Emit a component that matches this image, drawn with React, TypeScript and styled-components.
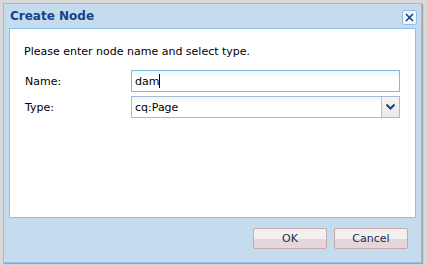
import styled, { createGlobalStyle } from "styled-components";

const Global = createGlobalStyle`
  html, body {
    margin: 0;
    padding: 0;
    background: #d9d9d9;
  }
  body {
    width: 427px;
    height: 266px;
    overflow: hidden;
    font-family: Tahoma, "DejaVu Sans", sans-serif;
  }
`;

const Page = styled.div`
  padding: 3px 5px 3px 3px;
  box-sizing: border-box;
  width: 427px;
  height: 266px;
`;

const Window = styled.div`
  height: 100%;
  box-sizing: border-box;
  background: #c5dcee;
  border: 1px solid #99bbe8;
  box-shadow: 1px 1px 1px rgba(0, 0, 0, 0.25);
  padding: 0 5px 0 5px;
  display: flex;
  flex-direction: column;
`;

const Header = styled.div`
  height: 24px;
  display: flex;
  align-items: center;
  justify-content: space-between;
  padding: 0 0 0 1px;
`;

const Title = styled.span`
  font-family: Tahoma, "DejaVu Sans", sans-serif;
  font-size: 12px;
  font-weight: bold;
  color: #15428b;
`;

const CloseButton = styled.div`
  width: 13px;
  height: 13px;
  margin-right: -1px;
  margin-top: 3px;
  border: 1px solid #99bbe8;
  border-radius: 2px;
  background: #f2f7fc;
  display: flex;
  align-items: center;
  justify-content: center;
`;

const Body = styled.div`
  flex: 1;
  background: #fff;
  border: 1px solid #8cc0ee;
  padding: 15px 15px 0 14px;
`;

const Intro = styled.div`
  font-size: 11px;
  color: #000;
  margin-bottom: 11px;
  line-height: 15px;
`;

const Row = styled.div`
  display: flex;
  align-items: center;
  margin-bottom: 4px;
`;

const Label = styled.label`
  width: 106px;
  font-size: 11px;
  color: #000;
  padding-left: 1px;
`;

const Field = styled.div<{ $focus?: boolean }>`
  flex: 1;
  height: 20px;
  box-sizing: content-box;
  border: 1px solid ${(p) => (p.$focus ? "#7eb9e2" : "#a9b7d8")};
  background: linear-gradient(#eef6f8, #fff 7px);
  display: flex;
  align-items: center;
  font-size: 11px;
  color: #000;
`;

const Value = styled.span`
  flex: 1;
  padding-left: 3px;
  display: flex;
  align-items: center;
`;

const Caret = styled.span`
  display: inline-block;
  width: 1px;
  height: 14px;
  background: #000;
`;

const Trigger = styled.div`
  width: 17px;
  height: 20px;
  border-left: 1px solid #b8c0d8;
  background: linear-gradient(#f7f3f3, #ece8e8);
  display: flex;
  align-items: center;
  justify-content: center;
`;

const Footer = styled.div`
  height: 44px;
  display: flex;
  justify-content: flex-end;
  align-items: flex-start;
  gap: 7px;
  padding: 10px 8px 0 0;
  box-sizing: border-box;
`;

const Button = styled.div`
  width: 72px;
  height: 19px;
  border: 1px solid #c5a9ab;
  border-radius: 2px;
  background: linear-gradient(#f4f0f0 0, #f4f0f0 55%, #e5d7d9 55%, #e5d7d9 100%);
  font-size: 11px;
  color: #1c2c50;
  display: flex;
  align-items: center;
  justify-content: center;
`;

export default function App() {
  return (
    <Page>
      <Global />
      <Window>
        <Header>
          <Title>Create Node</Title>
          <CloseButton>
            <svg width="9" height="9" viewBox="0 0 9 9">
              <path d="M1 1L8 8M8 1L1 8" stroke="#15428b" strokeWidth="1.6" />
            </svg>
          </CloseButton>
        </Header>
        <Body>
          <Intro>Please enter node name and select type.</Intro>
          <Row>
            <Label>Name:</Label>
            <Field $focus>
              <Value>
                dam
                <Caret />
              </Value>
            </Field>
          </Row>
          <Row>
            <Label>Type:</Label>
            <Field>
              <Value>cq:Page</Value>
              <Trigger>
                <svg width="9" height="6" viewBox="0 0 9 6">
                  <path d="M0.5 0.5L4.5 4.5L8.5 0.5" fill="none" stroke="#15428b" strokeWidth="2" />
                </svg>
              </Trigger>
            </Field>
          </Row>
        </Body>
        <Footer>
          <Button>OK</Button>
          <Button>Cancel</Button>
        </Footer>
      </Window>
    </Page>
  );
}
